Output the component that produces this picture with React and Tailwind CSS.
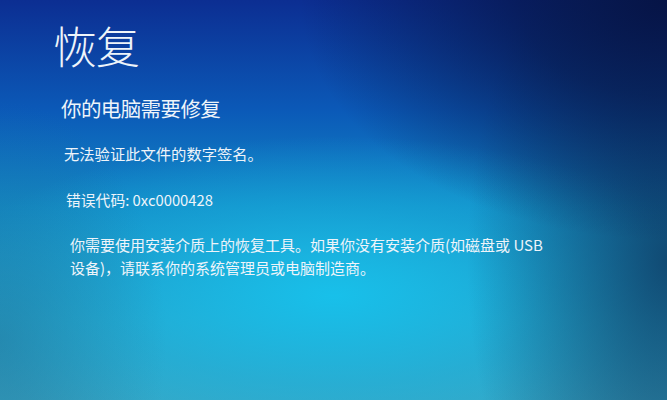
import React from "react";

const font = { fontFamily: '"Noto Sans CJK SC", "Noto Sans", sans-serif' };

export default function App() {
  return (
    <div
      className="w-[667px] h-[400px] overflow-hidden text-[#eef4fa] bg-[radial-gradient(ellipse_55%_60%_at_100%_0%,#061446_0%,rgba(6,20,70,0.7)_40%,transparent_100%),radial-gradient(ellipse_30%_90%_at_100%_65%,rgba(14,60,100,0.85)_0%,transparent_100%),radial-gradient(ellipse_25%_60%_at_0%_85%,rgba(30,110,150,0.5)_0%,transparent_100%),radial-gradient(ellipse_60%_40%_at_50%_74%,#18c0ea_0%,rgba(24,184,228,0.45)_55%,transparent_100%),linear-gradient(180deg,#0c2e92_0%,#0b5ab8_28%,#138ac6_52%,#2aa2c8_80%,#38a6c4_100%)]"
      style={font}
    >
      <div className="flex flex-col pt-[19px]">
        <h1 className="ml-[53px] text-[44px] leading-[53px] font-light tracking-[-1px]">恢复</h1>
        <h2 className="ml-[61px] mt-[23px] text-[20.5px] leading-[26px] font-normal tracking-[-0.6px]">
          你的电脑需要修复
        </h2>
        <p className="ml-[64px] mt-[22px] text-[15.3px] leading-[20px]">无法验证此文件的数字签名。</p>
        <p className="ml-[66px] mt-[27px] text-[14.8px] leading-[20px]">错误代码: 0xc0000428</p>
        <p className="ml-[70px] mt-[23px] text-[15px] leading-[23px]">
          你需要使用安装介质上的恢复工具。如果你没有安装介质(如磁盘或 USB
          <br />
          设备)，请联系你的系统管理员或电脑制造商。
        </p>
      </div>
    </div>
  );
}
